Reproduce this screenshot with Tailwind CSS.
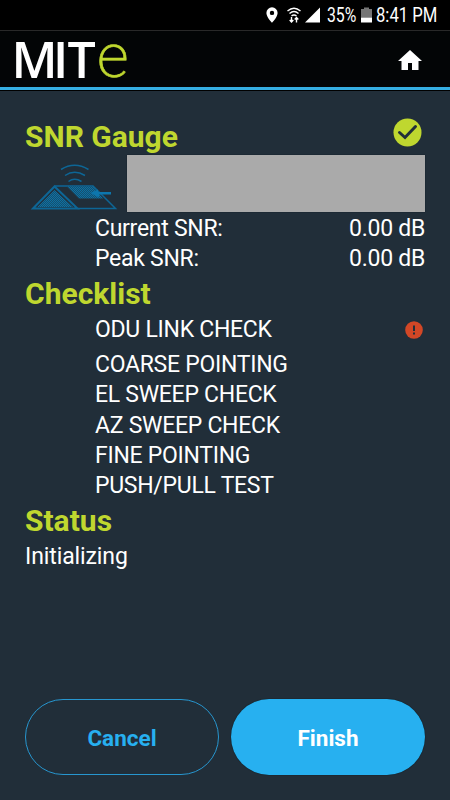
<!DOCTYPE html>
<html lang="en">
<head>
    <meta charset="UTF-8">
    <meta name="viewport" content="width=device-width, initial-scale=1.0">
    <title>MITe - Pointing</title>
    <script src="https://cdn.jsdelivr.net/npm/@tailwindcss/browser@4"></script>
</head>
<body class="bg-[#212e39] font-[Roboto,sans-serif] text-white">
    <div class="flex h-[800px] w-[450px] flex-col overflow-hidden">
        <!-- Status Bar -->
        <div class="flex h-[30px] shrink-0 items-center justify-end bg-black pr-[13px]">
            <svg class="mr-[9px] h-4 w-3" viewBox="0 0 12 16">
                <path fill="#fff" fill-rule="evenodd" d="M6 0.3a5.6 5.6 0 0 0-5.6 5.6C0.4 10 6 15.7 6 15.7S11.6 10 11.6 5.9A5.6 5.6 0 0 0 6 0.3zM6 3.7a2.2 2.2 0 1 1 0 4.4a2.2 2.2 0 0 1 0-4.4z"/>
            </svg>
            <svg class="mr-[4px] h-4 w-[14px]" viewBox="0 0 14 16" fill="none" stroke="#fff" stroke-width="1.4">
                <path d="M0.500 4Q7-1.500 13.500 4M2.500 6.600Q7 2.600 11.500 6.600M4.500 9Q7 6.800 9.500 9"/>
                <path d="M4.500 10v5M2.700 13L4.500 15L6.300 13M9.500 15.500v-5M7.700 12.400L9.500 10.500L11.300 12.400"/>
            </svg>
            <svg class="mr-[6px] h-4 w-[16px]" viewBox="0 0 16 16"><path fill="#fff" d="M15 0.500V15.500H0z"/></svg>
            <svg class="h-[30px] w-[30px] overflow-visible" viewBox="0 0 30 30"><text transform="translate(0 22) scale(.81 1)" font-size="19.5" fill="#fff">35%</text></svg>
            <svg class="mr-[4px] ml-[4px] h-4 w-[11px]" viewBox="0 0 11 16">
                <path fill="#757575" d="M3 0.500h5v1.500h3v8.500H0V2h3z"/>
                <path fill="#fff" d="M0 10.500h11v5H0z"/>
            </svg>
            <svg class="h-[30px] w-[61px] overflow-visible" viewBox="0 0 61 30"><text transform="translate(0 22) scale(.855 1)" font-size="19.5" fill="#fff">8:41 PM</text></svg>
        </div>

        <!-- Header -->
        <header class="flex h-[61px] shrink-0 items-center justify-between border-t border-b border-t-[#292929] border-b-black bg-black">
            <div class="flex h-full w-full items-center justify-between border-b-[3px] border-[#35aee2] bg-[#030506] pr-[28px]">
                <svg class="h-[56px] w-[140px] overflow-visible" viewBox="0 0 140 56" font-family="'Open Sans', sans-serif">
                    <text x="11.5 53 67.5" y="46.5" font-size="50" font-weight="600" fill="#fff">MIT</text>
                    <text x="97" y="46" font-family="Roboto" font-size="62" font-weight="200" fill="#bfd72f" stroke="#bfd72f" stroke-width=".6">e</text>
                </svg>
                <svg class="mt-[2px] h-5 w-6" viewBox="0 0 24 20"><path fill="#fff" d="M12 0L24 11H20.500V20H14V13H10V20H3.500V11H0z"/></svg>
            </div>
        </header>

        <main class="flex flex-1 flex-col px-[25px] pt-[25px] text-[23px] leading-[30px]">
            <!-- SNR Gauge -->
            <div class="flex h-[39px] justify-between">
                <h2 class="text-[30px] leading-[41px] font-bold text-[#bfd72f]">SNR Gauge</h2>
                <svg class="mt-[2px] mr-[3px] h-[29px] w-[29px]" viewBox="0 0 29 29">
                    <circle cx="14.5" cy="14.5" r="14" fill="#bfd72f"/>
                    <path d="M6.500 14.500L12 19.500L22.500 8.500" fill="none" stroke="#212e39" stroke-width="3" stroke-linecap="round"/>
                </svg>
            </div>
            <div class="flex h-[57px]">
                <svg class="h-[57px] w-[102px]" viewBox="0 0 102 57" fill="none" stroke="#0d6696" stroke-width="1.5">
                    <defs>
                        <pattern id="mesh" width="2" height="2" patternUnits="userSpaceOnUse">
                            <path d="M0 0h2v2H0z" fill="#17506d" stroke="none"/>
                            <path d="M0 0h1v1H0zM1 1h1v1H1z" fill="#0d70a4" stroke="none"/>
                        </pattern>
                    </defs>
                    <!-- signal waves -->
                    <path d="M36 14.500Q49.500 6 63.500 14.500M40 20.500Q49.500 14 60 20.500M43.500 26.500Q49.500 22 56.500 26.500"/>
                    <!-- dish body -->
                    <path d="M8 53.500L29.500 31.500L52.500 53.500z" stroke-width="2"/>
                    <path d="M12.500 52L29.500 35L48 52z" fill="url(#mesh)" stroke="none"/>
                    <path d="M29.500 31H68L90.500 53.500H52.500"/>
                    <path d="M42 31.500H68L78 43.500H54z" fill="url(#mesh)" stroke="none"/>
                    <path d="M65.500 38L73 34.500V37H86V39.500H74V42.500z" fill="#0d76ad" stroke="none"/>
                </svg>
                <div class="flex-1 bg-[#aaaaaa] shadow-[0_0_1px_#0b1722]"></div>
            </div>
            <div class="mt-[2px] flex justify-between pl-[70px] tracking-[-0.28px]"><span>Current SNR:</span><span>0.00 dB</span></div>
            <div class="flex justify-between pl-[70px] tracking-[-0.28px]"><span>Peak SNR:</span><span>0.00 dB</span></div>

            <!-- Checklist -->
            <h2 class="text-[30px] leading-[40px] font-bold text-[#bfd72f]">Checklist</h2>
            <div class="flex h-[36px] justify-between pl-[70px] tracking-[-0.28px]">
                <span class="pt-px">ODU LINK CHECK</span>
                <svg class="mt-[7px] mr-[2px] h-[18px] w-[18px]" viewBox="0 0 18 18">
                    <circle cx="9" cy="9" r="8.8" fill="#d24726"/>
                    <path d="M9 4.500v5.500M9 11.500v2" stroke="#212e39" stroke-width="2"/>
                </svg>
            </div>
            <ul class="pl-[70px] leading-[30.3px] tracking-[-0.28px]">
                <li>COARSE POINTING</li>
                <li>EL SWEEP CHECK</li>
                <li>AZ SWEEP CHECK</li>
                <li>FINE POINTING</li>
                <li>PUSH/PULL TEST</li>
            </ul>

            <!-- Status -->
            <h2 class="text-[30px] leading-[40px] font-bold text-[#bfd72f]">Status</h2>
            <p class="pt-px tracking-[-0.1px]">Initializing</p>

            <!-- Actions -->
            <div class="mt-auto mb-[25px] flex justify-between text-[22.5px] font-bold">
                <button class="h-[76px] w-[194px] rounded-full border border-[#2796cf] pt-px text-[#27b0f0]">Cancel</button>
                <button class="h-[76px] w-[194px] rounded-full bg-[#27b0f0] pt-px text-white shadow-[0_0_1px_#000]">Finish</button>
            </div>
        </main>
    </div>
</body>
</html>
